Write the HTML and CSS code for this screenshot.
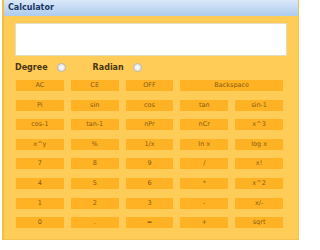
FILE: index.html
```html
<!DOCTYPE html>
<html lang="en">

<head>
    <meta charset="UTF-8">
    <title>Calculator</title>
    <link rel="stylesheet" href="styles.css">
</head>

<body>
    <div class="panel">
        <div class="header">Calculator</div>
        <div class="content">
            <input type="text" class="display" id="display">
            <div class="mode">
                <label>Degree <input type="radio" name="mode" class="radio"></label>
                <label class="radian">Radian <input type="radio" name="mode" class="radio"></label>
            </div>
            <div class="buttons">
                <button>AC</button>
                <button>CE</button>
                <button>OFF</button>
                <button class="wide">Backspace</button>
                <button>Pi</button>
                <button>sin</button>
                <button>cos</button>
                <button>tan</button>
                <button>sin-1</button>
                <button>cos-1</button>
                <button>tan-1</button>
                <button>nPr</button>
                <button>nCr</button>
                <button>x^3</button>
                <button>x^y</button>
                <button>%</button>
                <button>1/x</button>
                <button>ln x</button>
                <button>log x</button>
                <button>7</button>
                <button>8</button>
                <button>9</button>
                <button>/</button>
                <button>x!</button>
                <button>4</button>
                <button>5</button>
                <button>6</button>
                <button>*</button>
                <button>x^2</button>
                <button>1</button>
                <button>2</button>
                <button>3</button>
                <button>-</button>
                <button>x/-</button>
                <button>0</button>
                <button>.</button>
                <button>=</button>
                <button>+</button>
                <button>sqrt</button>
            </div>
        </div>
    </div>
</body>

</html>
```

FILE: styles.css
```css
body {
    margin: 0;
    background: white;
    font-family: "DejaVu Sans", Verdana, sans-serif;
}

.panel {
    width: 297px;
    margin-left: 2px;
    background: #ffcd57;
    border-left: 2px solid #f3bf45;
    border-right: 1px solid #f3c24e;
    border-bottom: 1px solid #f3c24e;
    box-sizing: border-box;
}

.header {
    height: 16px;
    line-height: 16px;
    padding-left: 4px;
    font-size: 8px;
    font-weight: bold;
    color: #1b3766;
    background: linear-gradient(#d9e8f8, #adcbee);
}

.content {
    padding: 7px 10px 11px 11px;
}

.display {
    display: block;
    width: 272px;
    height: 33px;
    margin: 0;
    border: 1px solid #e8dcc0;
    background: white;
    box-sizing: border-box;
}

.mode {
    display: flex;
    align-items: center;
    height: 20px;
    margin-top: 1px;
    font-size: 8px;
    font-weight: bold;
    color: #4a3410;
}

.mode label {
    display: flex;
    align-items: center;
}

.radian {
    margin-left: 27px;
}

.radio {
    width: 9px;
    height: 9px;
    margin: 0 0 0 9px;
    border: 1px solid #b8b8b8;
    border-radius: 50%;
    background: radial-gradient(#ffffff, #d8d8d8);
    appearance: none;
}

.buttons {
    display: grid;
    grid-template-columns: repeat(5, 1fr);
    column-gap: 7px;
    row-gap: 8.6px;
    margin-top: 3px;
    padding: 0 5px 0 1px;
}

button {
    height: 11px;
    padding: 0;
    border: none;
    background: #ffb324;
    color: #8a5a12;
    font-family: "DejaVu Sans", Verdana, sans-serif;
    font-size: 6.5px;
    line-height: 11px;
}

.wide {
    grid-column: span 2;
}
```
